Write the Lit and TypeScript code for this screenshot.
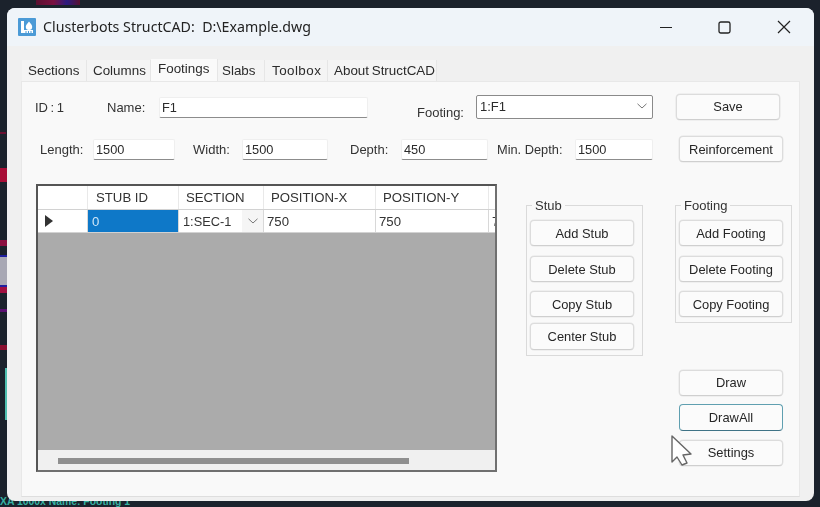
import { LitElement, html, css } from "lit";
import { customElement } from "lit/decorators.js";

const chevron = html`<svg class="chev" width="10" height="6" viewBox="0 0 10 6"><path d="M0.5 0.8 L5 5 L9.5 0.8" fill="none" stroke="#777" stroke-width="1"/></svg>`;

@customElement("app-root")
export class AppRoot extends LitElement {
  static styles = css`
    :host {
      display: block;
      position: relative;
      width: 820px;
      height: 507px;
      box-sizing: border-box;
      padding: 8px 6px 6px 7px;
      background: #1b222c;
      overflow: hidden;
      font-family: "Liberation Sans", Arial, sans-serif;
      font-size: 13px;
      color: #2b2b2b;
    }
    .bg { position: absolute; display: block; }
    .bg.a { left: 36px; top: 0; width: 44px; height: 5px; background: linear-gradient(90deg, #5a1030, #7a1040 40%, #2b1b80 70%, #5a1030); }
    .bg.b { left: 0; top: 168px; width: 7px; height: 14px; background: #a80e36; }
    .bg.c { left: 0; top: 240px; width: 7px; height: 6px; background: #8a1040; }
    .bg.d { left: 0; top: 255px; width: 7px; height: 32px; background: #a8a8b4; border-top: 2px solid #2020a0; border-bottom: 2px solid #2020a0; box-sizing: border-box; }
    .bg.e { left: 0; top: 287px; width: 7px; height: 6px; background: #a01040; }
    .bg.f { left: 0; top: 345px; width: 7px; height: 5px; background: #8a1030; }
    .bg.g { left: 5px; top: 368px; width: 2px; height: 52px; background: #4fbfb0; }
    .bg.h { left: 0; top: 132px; width: 6px; height: 2px; background: #6a1030; }
    .bg.i { left: 0; top: 309px; width: 7px; height: 3px; background: #5a1070; }
    .cad {
      position: absolute;
      left: 0;
      top: 496px;
      font-size: 10.4px;
      line-height: 11px;
      font-weight: 700;
      color: #36b0a2;
      white-space: nowrap;
    }
    .window {
      position: relative;
      z-index: 1;
      height: 493px;
      display: flex;
      flex-direction: column;
      border-radius: 8px;
      overflow: hidden;
      background: #f0f0f0;
      filter: blur(0.35px);
    }
    .titlebar {
      flex: none;
      height: 38px;
      display: flex;
      align-items: center;
      background: #eff4f9;
      padding-left: 11px;
      box-sizing: border-box;
    }
    .title {
      margin-left: 7px;
      font-family: "Noto Sans", sans-serif;
      font-size: 14.2px;
      color: #222;
      white-space: pre;
      position: relative;
      top: -0.5px;
    }
    .controls { margin-left: auto; display: flex; align-items: center; }
    .controls svg { display: block; }
    .controls .c1 { margin-right: 46px; }
    .controls .c2 { margin-right: 46px; }
    .controls .c3 { margin-right: 23px; }
    .client { flex: 1; display: flex; flex-direction: column; padding: 13px 14px 4px 14px; min-height: 0; }
    .tabs { flex: none; height: 22px; display: flex; align-items: flex-end; padding-left: 1px; font-size: 13.4px; }
    .tab {
      height: 21px;
      display: flex;
      align-items: center;
      background: #f4f4f4;
      border-right: 1px solid #e6e6e6;
      box-sizing: border-box;
      white-space: nowrap;
    }
    .tab.on { height: 22px; background: #fafafa; padding-bottom: 3px; }
    .t1 { width: 65px; padding-left: 6px; }
    .t2 { width: 64px; padding-left: 6px; }
    .t3 { width: 67px; padding-left: 7px; }
    .t4 { width: 47px; padding-left: 4px; }
    .t5 { width: 63px; padding-left: 7px; letter-spacing: 0.45px; }
    .t6 { width: 109px; padding-left: 6px; word-spacing: -1px; }
    .panel {
      flex: 1;
      min-height: 0;
      background: #f9f9f9;
      border: 1px solid #e8e8e8;
      border-bottom-color: #dedede;
      box-sizing: border-box;
    }
    .row { display: flex; align-items: center; white-space: nowrap; }
    .row1 { height: 26px; margin-top: 12px; }
    .row2 { height: 26px; margin-top: 16px; }
    .lbl { flex: none; color: #333; }
    .l-id { margin-left: 13px; width: 72px; word-spacing: -1px; }
    .l-name { width: 52px; }
    .l-footing { margin-left: 49px; width: 59px; padding-top: 11px; }
    .l-length { margin-left: 18px; width: 53px; }
    .l-width { margin-left: 18px; width: 49px; }
    .l-depth { margin-left: 22px; width: 51px; }
    .l-min { margin-left: 9px; width: 78px; font-size: 12.8px; }
    .field {
      flex: none;
      box-sizing: border-box;
      height: 21px;
      background: #fff;
      border: 1px solid #efefef;
      border-bottom: 1px solid #8c8c8c;
      border-radius: 2px;
      padding-left: 2px;
      display: flex;
      align-items: center;
      font-size: 12.8px;
    }
    .f-name { width: 209px; }
    .f-length { width: 82px; }
    .f-width { width: 86px; }
    .f-depth { width: 87px; }
    .f-min { width: 78px; }
    .select {
      flex: none;
      box-sizing: border-box;
      width: 177px;
      height: 24px;
      background: #fff;
      border: 1px solid #8a8a8a;
      border-radius: 2px;
      padding: 0 5px 2px 3px;
      display: flex;
      align-items: center;
      justify-content: space-between;
    }
    .btn {
      flex: none;
      box-sizing: border-box;
      width: 104px;
      height: 26px;
      background: #fbfbfb;
      border: 1px solid #dcdcdc;
      border-bottom-color: #cfcfcf;
      box-shadow: 0 0 0 0.5px #e6e6e6;
      border-radius: 4px;
      padding: 0;
      font: inherit;
      font-size: 12.9px;
      color: #262626;
      display: flex;
      align-items: center;
      justify-content: center;
    }
    .btn.focus { border: 1.5px solid #5f9fb0; border-bottom-color: #3f7386; height: 27px; box-shadow: none; }
    .b-save { margin-left: 23px; padding-bottom: 2px; }
    .b-reinf { margin-left: 26px; }
    .main { display: flex; align-items: flex-start; margin-top: 22px; }
    .grid {
      flex: none;
      margin-left: 14px;
      width: 461px;
      height: 288px;
      box-sizing: border-box;
      border: 2px solid #555;
      border-right-color: #707070;
      border-bottom-color: #707070;
      display: flex;
      flex-direction: column;
      background: #ababab;
    }
    .gr {
      flex: none;
      display: grid;
      grid-template-columns: 50px 91px 85px 112px 113px 20px;
      background: #fff;
      overflow: hidden;
    }
    .gr.h { height: 23px; }
    .gr.d { height: 22px; border-top: 1.5px solid #d2d2d2; border-bottom: 1.5px solid #d2d2d2; }
    .cell {
      display: flex;
      align-items: center;
      border-right: 1.5px solid #d8d8d8;
      box-sizing: border-box;
      white-space: nowrap;
      overflow: hidden;
      font-size: 13.2px;
      color: #333;
    }
    .h .cell { padding: 0 0 1px 7px; border-right-color: #e9e9e9; }
    .h .cell.stub { padding-left: 8px; }
    .d .cell { padding-left: 3px; }
    .d .cell.sel { background: #0e78c8; color: #cfe6f7; padding-left: 4px; }
    .d .cell.combo { padding: 0 0 0 4px; justify-content: space-between; font-size: 12.8px; }
    .combo i { flex: none; width: 21px; height: 100%; background: #f5f5f5; display: flex; align-items: center; justify-content: center; }
    .rowhead svg { margin-left: 3px; }
    .grayarea { flex: 1; }
    .hscroll { flex: none; height: 20px; background: #f0f0f0; display: flex; align-items: center; padding: 1px 0 0 20px; box-sizing: border-box; }
    .thumb { width: 351px; height: 6px; background: #8f8f8f; }
    fieldset {
      margin: 0;
      padding: 0 0 5px 3px;
      border: 1px solid #dadada;
      min-width: 0;
      box-sizing: border-box;
    }
    legend {
      margin-left: 2px;
      padding: 0 3px;
      line-height: 16px;
      height: 16px;
      color: #333;
      position: relative;
      top: 1px;
    }
    .stack { display: flex; flex-direction: column; padding-top: 7px; }
    .stack .btn:nth-child(2) { margin-top: 10px; }
    .stack .btn:nth-child(3) { margin-top: 9px; }
    .stack .btn:nth-child(4) { margin-top: 6px; height: 27px; }
    .g1 { flex: none; width: 117px; margin-left: 29px; margin-top: 13px; }
    .col { flex: none; width: 117px; margin-left: 32px; margin-top: 13px; display: flex; flex-direction: column; }
    .draws { display: flex; flex-direction: column; margin: 47px 0 0 4px; }
    .draws .btn { padding-bottom: 1px; }
    .draws .btn + .btn { margin-top: 8px; }
    .draws .btn + .btn + .btn { margin-top: 9px; }
    .cursor { position: absolute; left: 664px; top: 428px; z-index: 2; filter: blur(0.3px); }
  `;

  render() {
    return html`
      <span class="bg a"></span><span class="bg b"></span><span class="bg c"></span>
      <span class="bg d"></span><span class="bg e"></span><span class="bg f"></span>
      <span class="bg g"></span><span class="bg h"></span><span class="bg i"></span>
      <span class="cad">XA 1000x Name: Footing 1</span>
      <div class="window">
        <div class="titlebar">
          <svg width="18" height="18" viewBox="0 0 18 18">
            <rect width="18" height="18" rx="1" fill="#4b9ad6"/>
            <path d="M3 3 H6 V12 H15 V15 H3 Z" fill="#fff"/>
            <path d="M11 3.5 C12.6 5.6 14.2 7 14.2 8.8 A3.2 3.2 0 0 1 7.8 8.8 C7.8 7 9.4 5.6 11 3.5 Z" fill="#fff"/>
            <path d="M8 13 V15 M10.5 13 V15 M13 13 V15" stroke="#4b9ad6" stroke-width="1"/>
          </svg>
          <span class="title">Clusterbots StructCAD:  D:\\Example.dwg</span>
          <div class="controls">
            <svg class="c1" width="12" height="12" viewBox="0 0 12 12"><path d="M0 6.5 H12" stroke="#222" stroke-width="1.2"/></svg>
            <svg class="c2" width="13" height="13" viewBox="0 0 13 13"><rect x="1" y="1" width="11" height="11" rx="1.8" fill="none" stroke="#222" stroke-width="1.3"/></svg>
            <svg class="c3" width="14" height="14" viewBox="0 0 14 14"><path d="M1 1 L13 13 M13 1 L1 13" stroke="#222" stroke-width="1.2"/></svg>
          </div>
        </div>
        <div class="client">
          <div class="tabs">
            <div class="tab t1">Sections</div>
            <div class="tab t2">Columns</div>
            <div class="tab on t3">Footings</div>
            <div class="tab t4">Slabs</div>
            <div class="tab t5">Toolbox</div>
            <div class="tab t6">About StructCAD</div>
          </div>
          <div class="panel">
            <div class="row row1">
              <span class="lbl l-id">ID : 1</span>
              <span class="lbl l-name">Name:</span>
              <span class="field f-name">F1</span>
              <span class="lbl l-footing">Footing:</span>
              <span class="select">1:F1 ${chevron}</span>
              <button class="btn b-save">Save</button>
            </div>
            <div class="row row2">
              <span class="lbl l-length">Length:</span>
              <span class="field f-length">1500</span>
              <span class="lbl l-width">Width:</span>
              <span class="field f-width">1500</span>
              <span class="lbl l-depth">Depth:</span>
              <span class="field f-depth">450</span>
              <span class="lbl l-min">Min. Depth:</span>
              <span class="field f-min">1500</span>
              <button class="btn b-reinf">Reinforcement</button>
            </div>
            <div class="main">
              <div class="grid">
                <div class="gr h">
                  <div class="cell"></div>
                  <div class="cell stub">STUB ID</div>
                  <div class="cell">SECTION</div>
                  <div class="cell">POSITION-X</div>
                  <div class="cell">POSITION-Y</div>
                  <div class="cell"></div>
                </div>
                <div class="gr d">
                  <div class="cell rowhead"><svg width="12" height="14" viewBox="0 0 12 14"><path d="M1 1 L9 7 L1 13 Z" fill="#333"/></svg></div>
                  <div class="cell sel">0</div>
                  <div class="cell combo">1:SEC-1<i>${chevron}</i></div>
                  <div class="cell">750</div>
                  <div class="cell">750</div>
                  <div class="cell">750</div>
                </div>
                <div class="grayarea"></div>
                <div class="hscroll"><div class="thumb"></div></div>
              </div>
              <fieldset class="g1">
                <legend>Stub</legend>
                <div class="stack">
                  <button class="btn">Add Stub</button>
                  <button class="btn">Delete Stub</button>
                  <button class="btn">Copy Stub</button>
                  <button class="btn">Center Stub</button>
                </div>
              </fieldset>
              <div class="col">
                <fieldset>
                  <legend>Footing</legend>
                  <div class="stack">
                    <button class="btn">Add Footing</button>
                    <button class="btn">Delete Footing</button>
                    <button class="btn">Copy Footing</button>
                  </div>
                </fieldset>
                <div class="draws">
                  <button class="btn">Draw</button>
                  <button class="btn focus">DrawAll</button>
                  <button class="btn">Settings</button>
                </div>
              </div>
            </div>
          </div>
        </div>
      </div>
      <svg class="cursor" width="32" height="42" viewBox="-7 -7 32 42"><path d="M1 1 V27 L6 22 L11 30 L16 28 L12 20 L20 19 Z" fill="#fff" fill-opacity="0.92" stroke="#666" stroke-width="1.4" stroke-linejoin="round"/></svg>
    `;
  }
}
